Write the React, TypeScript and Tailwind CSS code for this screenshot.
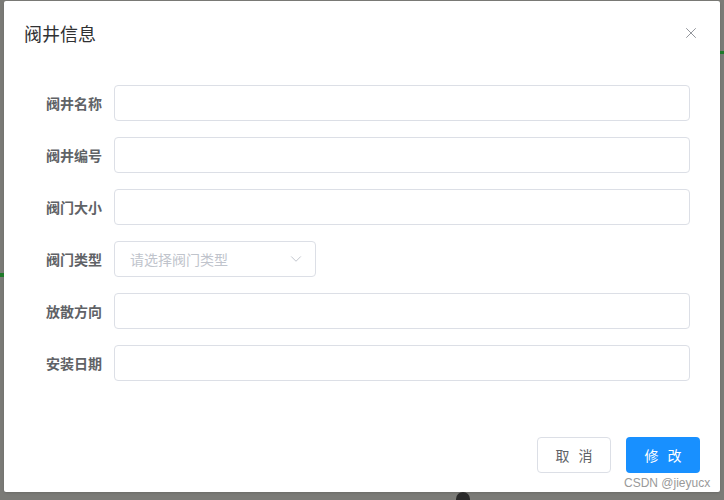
import { X, ChevronDown } from 'lucide-react';

const fields = [
  { label: '阀井名称', kind: 'input' },
  { label: '阀井编号', kind: 'input' },
  { label: '阀门大小', kind: 'input' },
  { label: '阀门类型', kind: 'select' },
  { label: '放散方向', kind: 'input' },
  { label: '安装日期', kind: 'input' },
];

export default function App() {
  return (
    <div
      className="relative w-[724px] h-[500px] overflow-hidden bg-[#7b7b77] pl-[4px] pt-[1px]"
      style={{ fontFamily: '"Noto Sans CJK SC", "Noto Sans", sans-serif' }}
    >
      {/* background bits peeking out behind the overlay */}
      <div className="absolute left-0 top-[273px] w-[4px] h-[4px] bg-[#1f7a2a]" />
      <div className="absolute right-0 top-[51px] w-[4px] h-[3px] bg-[#1f7a2a]" />
      <div className="absolute left-[456px] top-[492px] w-[14px] h-[14px] rounded-full bg-[#2a2a2a]" />

      {/* Dialog */}
      <div className="flex flex-col w-[716px] h-[491px] bg-white rounded-[2px] shadow">
        <div className="flex items-center justify-between pl-[20px] pr-[20px] pt-[20px]">
          <span className="text-[18px] leading-[24px] text-[#303133]">阀井信息</span>
          <X size={18} strokeWidth={1.3} className="text-[#909399]" />
        </div>

        <div className="flex flex-col gap-[16px] pt-[40px] pl-[20px] pr-[30px]">
          {fields.map((f) => (
            <div key={f.label} className="flex items-center h-[36px]">
              <label className="w-[90px] pr-[12px] text-right text-[14px] font-bold text-[#606266]">
                {f.label}
              </label>
              {f.kind === 'input' ? (
                <div className="flex-1 h-[36px] border border-[#dcdfe6] rounded-[4px]" />
              ) : (
                <div className="flex items-center justify-between w-[202px] h-[36px] border border-[#dcdfe6] rounded-[4px] pl-[15px] pr-[10px]">
                  <span className="text-[14px] text-[#c0c4cc]">请选择阀门类型</span>
                  <ChevronDown size={18} strokeWidth={1.3} className="text-[#c0c4cc]" />
                </div>
              )}
            </div>
          ))}
        </div>

        <div className="flex-1" />

        <div className="flex justify-end gap-[15px] pr-[20px] pb-[19px]">
          <button className="w-[74px] h-[36px] border border-[#dcdfe6] rounded-[4px] bg-white text-[14px] text-[#606266] tracking-[3px] pl-[3px]">
            取 消
          </button>
          <button className="w-[74px] h-[36px] rounded-[4px] bg-[#1890ff] text-[14px] text-white tracking-[3px] pl-[3px]">
            修 改
          </button>
        </div>
      </div>

      <div
        className="absolute left-[624px] top-[475px] text-[12px] leading-[16px] text-[#999999]"
        style={{ fontFamily: '"Liberation Sans", Arial, sans-serif' }}
      >
        CSDN @jieyucx
      </div>
    </div>
  );
}
